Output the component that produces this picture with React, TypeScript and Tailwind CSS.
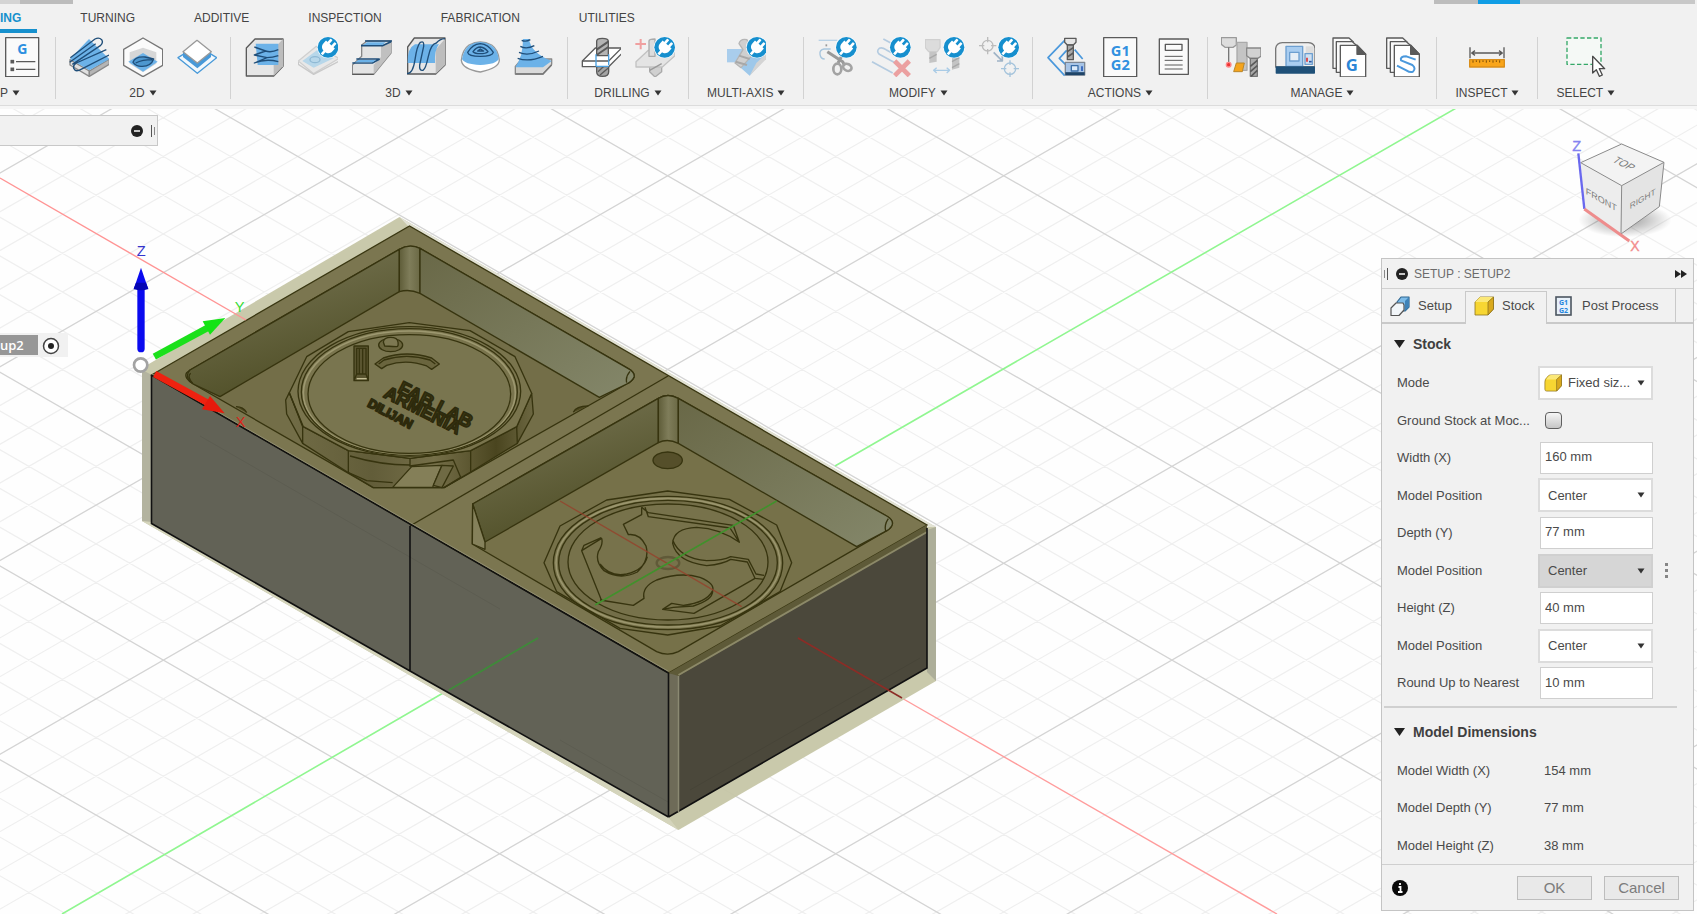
import React from "react";

type IconProps = { x: number; children: React.ReactNode };

function Glyph({ x, children }: IconProps) {
  return (
    <svg viewBox={`${x} 112 120 120`} className="size-10 shrink-0" fill="none" stroke="#5a5a5a" strokeWidth={4} strokeLinejoin="round" aria-hidden="true">
      {children}
    </svg>
  );
}

function Plug({ x }: { x: number }) {
  return (
    <g transform={`translate(${x} 143)`} stroke="none">
      <circle r="33" fill="#f6fbfe" />
      <circle r="31" fill="#168fce" />
      <g transform="rotate(42)" fill="#fff">
        <rect x="-12" y="-25" width="8" height="16" rx="2" />
        <rect x="4" y="-25" width="8" height="16" rx="2" />
        <path d="M-18-11H18V0C18 11 10 16 4 16V28H-4V16C-10 16-18 11-18 0Z" />
      </g>
    </g>
  );
}

const iconBlue = "#6cb2e8";
const lineBlue = "#1f4e79";

const icons: Record<string, React.ReactNode> = {
  "Setup sheet": (
    <Glyph x={6}>
      <rect x="17" y="114" width="99" height="117" fill="#fafafa" />
      <text x="67" y="164" textAnchor="middle" fontSize="42" fontWeight="700" fill="#2c8fe0" stroke="none" fontFamily="Open Sans">G</text>
      <path d="M48 186H106M48 209H106" />
      <path d="M32 181h10v10H32zM32 204h10v10H32z" fill="#5a5a5a" strokeWidth="1" />
    </Glyph>
  ),
  "2D Adaptive Clearing": (
    <Glyph x={210}>
      <path d="M213 180L271 214V230L213 196Z" fill="#e0e0e0" stroke="#888" />
      <path d="M271 214L331 178V194L271 230Z" fill="#b5b5b5" stroke="#888" />
      <path d="M213 178L270 118 331 178 271 212Z" fill={iconBlue} stroke="none" />
      <path d="M214 174L288 118Q300 112 308 120 314 130 304 138L220 194M212 188L290 132M240 212Q228 216 224 206 222 196 232 190L322 150M240 212L330 166" stroke={lineBlue} strokeWidth="4" />
    </Glyph>
  ),
  "2D Pocket": (
    <Glyph x={372}>
      <path d="M432 115L491 149V197L432 231 374 197V149Z" fill="#fbfbfb" stroke="#777" />
      <path d="M392 158L432 144 472 158V192L432 218 392 192Z" fill="#d7d7d7" stroke="none" />
      <path d="M388 186L432 160 476 186 432 216Z" fill={iconBlue} stroke="none" />
      <path d="M402 188Q408 170 438 172L464 178Q456 200 430 200Q414 202 402 188ZM410 190Q430 180 460 180" stroke={lineBlue} fill="#4d97cf" />
    </Glyph>
  ),
  "2D Contour": (
    <Glyph x={534}>
      <path d="M537 174L595 138 653 174 595 221Z" stroke="#4899d8" fill="#f3f8fc" />
      <path d="M552 156L595 190 636 156V172L595 206 552 172Z" fill="#4899d8" stroke="none" />
      <path d="M552 156L594 122 637 156 595 190Z" fill="#fff" stroke="#999" />
    </Glyph>
  ),
  "3D Adaptive Clearing": (
    <Glyph x={735}>
      <path d="M742 145L768 118H852V200L824 229H742Z" fill="#e6e6e6" />
      <path d="M852 118V200L824 229V148Z" fill="#bdbdbd" stroke="none" />
      <path d="M770 132H838V196H776Z" fill={iconBlue} stroke="none" />
      <path d="M766 142L800 154Q816 160 838 150M800 154L766 166 804 174Q820 174 838 168M804 174L766 190Q800 176 838 186" stroke={lineBlue} />
    </Glyph>
  ),
  "Pocket Clearing": (
    <Glyph x={897}>
      <path d="M898 184L952 140 1020 176 944 222Z" fill="#e8e8e8" stroke="#cfcfcf" />
      <path d="M910 184L956 150 1004 176 944 204Z" fill="#b7d7ea" stroke="none" />
      <ellipse cx="948" cy="180" rx="15" ry="9" stroke="#8fb9d4" />
      <path d="M898 186V194L944 224 1018 186" stroke="#c9c9c9" fill="none" />
      <Plug x={987} />
    </Glyph>
  ),
  "Steep and Shallow": (
    <Glyph x={1059}>
      <path d="M1060 196L1088 170V136L1104 124H1176V160L1124 224H1060Z" fill="#e4e4e4" stroke="#888" />
      <path d="M1176 124V160L1124 224V196L1146 172V140Z" fill="#c0c0c0" stroke="none" />
      <path d="M1098 124H1180M1086 138H1150L1176 126M1072 178H1142M1060 190H1120L1142 178" stroke={lineBlue} strokeWidth="5" />
      <path d="M1104 128H1160L1150 136H1092ZM1078 181H1130L1122 188H1068Z" fill={iconBlue} stroke="none" />
      <path d="M1060 224H1124" stroke="#5a5a5a" />
    </Glyph>
  ),
  Parallel: (
    <Glyph x={-39}>
      <path d="M-34 222V142L-14 115H78V196L50 223H-34Z" fill="#e6e6e6" />
      <path d="M78 117V196L50 223V150Z" fill="#bdbdbd" stroke="none" />
      <path d="M-34 190Q-36 146-12 134H60Q46 150 48 190Z" fill={iconBlue} stroke="none" />
      <path d="M-36 222Q-18 222-12 180T4 128Q16 122 14 140L2 196Q0 214 12 212 20 208 28 170T52 130Q62 118 78 117" stroke={lineBlue} />
    </Glyph>
  ),
  Contour: (
    <Glyph x={123}>
      <path d="M127 182Q130 150 150 136 184 118 218 136 238 150 241 182 240 206 184 217 130 208 127 182Z" fill="#fff" stroke="#999" />
      <path d="M129 178Q134 150 152 136 184 118 216 136 236 150 239 178 232 194 184 196 136 194 129 178Z" fill={iconBlue} stroke="none" />
      <path d="M146 158Q160 134 184 132 208 134 223 158 220 170 184 170 148 170 146 158ZM162 156Q172 142 184 142 198 144 207 156 200 162 184 162 168 162 162 156ZM176 154L184 148 194 154Z" stroke={lineBlue} />
    </Glyph>
  ),
  Ramp: (
    <Glyph x={285}>
      <path d="M289 200L308 178H398V194L372 223H289Z" fill="#dadada" stroke="#888" />
      <path d="M312 118H330Q336 160 398 184L372 203H289Q312 170 312 118Z" fill={iconBlue} stroke="none" />
      <path d="M308 122Q320 128 334 120M304 140Q322 150 346 138M300 158Q326 170 360 154M296 176Q330 188 372 170" stroke={lineBlue} />
      <path d="M289 223H372L398 196" stroke="#777" />
    </Glyph>
  ),
  Drill: (
    <Glyph x={483}>
      <path d="M530 178H566V216Q566 230 548 230T530 216Z" fill="#a5a5a5" />
      <path d="M534 216L562 190M540 226L564 206" />
      <path d="M487 184L526 145H605V162L566 201H487Z" fill="#fff" />
      <path d="M487 184H566L605 145" />
      <path d="M530 168V124Q530 116 547 116T565 124V168Z" fill="#b4b4b4" />
      <path d="M530 150L565 126M530 166L565 142" strokeWidth="6" />
      <path d="M528 164V200M566 164V196M528 200H566" stroke="#4aa0e0" />
    </Glyph>
  ),
  "Hole Recognition": (
    <Glyph x={648}>
      <path d="M649 133H681M665 118V149" stroke="#f0a0a0" strokeWidth="6" />
      <path d="M692 190H728V216L708 232 692 216Z" fill="#d0d0d0" stroke="#aaa" />
      <path d="M651 186L688 152H768V168L730 202H651Z" fill="#e4e4e4" stroke="#c2c2c2" />
      <path d="M690 170V124Q690 118 708 118V170Z" fill="#ddd" stroke="#aaa" />
      <path d="M692 212L728 192" stroke="#999" />
      <Plug x={737} />
    </Glyph>
  ),
  "Multi-Axis Contour": (
    <Glyph x={921}>
      <path d="M924 148H972V188H924Z" fill="#a9cdec" stroke="none" />
      <path d="M960 200L1008 160 1044 172 992 228Z" fill="#9ec8ea" stroke="none" />
      <path d="M992 228L1044 176V160L1012 190Z" fill="#d4d4d4" stroke="none" />
      <path d="M948 190L972 150 960 132Q964 116 984 120L1002 164 966 204Z" fill="#cfcfcf" stroke="#b5b5b5" />
      <path d="M950 186L984 196M960 168L992 178" stroke="#a8a8a8" strokeWidth="6" />
      <Plug x={1014} />
    </Glyph>
  ),
  Trim: (
    <Glyph x={63}>
      <path d="M68 122H124" stroke="#b9d2e6" />
      <path d="M104 148H84Q70 150 72 164T86 178" stroke="#a8c6de" />
      <path d="M91 134v6" stroke="#999" strokeWidth="5" />
      <path d="M94 156L140 186L146 198M142 160L126 190" stroke="#999" strokeWidth="9" />
      <ellipse cx="124" cy="208" rx="12" ry="16" stroke="#a3a3a3" strokeWidth="8" />
      <ellipse cx="154" cy="203" rx="13" ry="10" stroke="#a3a3a3" strokeWidth="8" transform="rotate(25 154 203)" />
      <Plug x={151} />
    </Glyph>
  ),
  "Delete Passes": (
    <Glyph x={225}>
      <path d="M228 186L290 220M298 190L250 164Q240 154 250 146 258 142 270 150L310 172M262 118L300 138" stroke="#b4cbe0" strokeWidth="5" />
      <path d="M296 184L340 228M340 184L296 228" stroke="#eba0a0" strokeWidth="14" />
      <Plug x={313} />
    </Glyph>
  ),
  "Replace Tool": (
    <Glyph x={387}>
      <path d="M388 120H432V144L424 156H398L388 144Z" fill="#dcdcdc" stroke="#d0d0d0" />
      <path d="M400 156H422V186L400 190Z" fill="#c4c4c4" stroke="none" />
      <path d="M468 166H490V204L468 210Z" fill="#c4c4c4" stroke="none" />
      <path d="M468 186L490 174M400 176L422 164M468 204L490 192" stroke="#a8a8a8" />
      <path d="M414 212H460M422 204L413 212 422 220M452 204L461 212 452 220" stroke="#a9cbe6" />
      <Plug x={474} />
    </Glyph>
  ),
  "Transform Pattern": (
    <Glyph x={546}>
      <circle cx="572" cy="138" r="16" stroke="#bcbcbc" />
      <path d="M572 112V128M572 148V164M546 138H562M582 138H598" stroke="#bcbcbc" />
      <path d="M590 158L614 182M616 168V184H600" stroke="#9fb3c6" strokeWidth="5" />
      <circle cx="639" cy="207" r="17" stroke="#a5c4dc" />
      <path d="M639 182V196M639 218V232M612 207H628M650 207H666" stroke="#a5c4dc" />
      <Plug x={635} />
    </Glyph>
  ),
  Simulate: (
    <Glyph x={750}>
      <path d="M806 122L756 174 806 228M812 152L790 176 808 194M836 150L860 178" stroke="#4a98dc" strokeWidth="5" />
      <path d="M806 116H840V128L832 136H814L806 128Z" fill="#e6e6e6" />
      <path d="M814 136H832V180H814Z" fill="#aaa" />
      <path d="M814 156L832 144M814 172L832 160" strokeWidth="5" />
      <rect x="808" y="188" width="58" height="38" fill="#a7c4e6" stroke="#7d8794" />
      <path d="M808 222H866" stroke="#1e4468" strokeWidth="9" />
      <rect x="826" y="198" width="20" height="16" fill="#dcebfa" stroke="#3a6ea8" />
      <path d="M858 200v14" stroke="#3c6cc0" strokeWidth="6" />
    </Glyph>
  ),
  "Post Process": (
    <Glyph x={906}>
      <rect x="917" y="114" width="99" height="117" fill="#fafafa" />
      <text y="168" textAnchor="middle" fontSize="44" fontWeight="700" fill="#3191e0" stroke="none" fontFamily="Open Sans">
        <tspan x="967">G1</tspan>
        <tspan x="967" dy="42">G2</tspan>
      </text>
    </Glyph>
  ),
  "Setup Sheet": (
    <Glyph x={1071}>
      <rect x="1087" y="118" width="87" height="106" fill="#fafafa" />
      <rect x="1105" y="134" width="50" height="18" />
      <path d="M1103 170H1157M1103 182H1157M1103 196H1157M1103 208H1157" strokeWidth="3" />
    </Glyph>
  ),
  "Tool Library": (
    <Glyph x={72}>
      <path d="M73 114H118V136L108 143H84L73 134Z" fill="#ddd" stroke="#9a9a9a" />
      <path d="M95 143V190" stroke="#777" />
      <circle cx="95" cy="195" r="7" fill="#e33" stroke="#f88" />
      <path d="M120 128H150V212H120Z" fill="#c4c4c4" stroke="#aaa" />
      <path d="M118 190H142L136 216H110Z" fill="#f5a41c" stroke="#b9862a" strokeWidth="3" />
      <path d="M149 145H192V170L182 176H159L149 168Z" fill="#d2d2d2" stroke="#888" />
      <path d="M160 176H181V230H160Z" fill="#aaa" stroke="#777" />
      <path d="M160 200L181 182M160 216L181 198M162 230L181 212" strokeWidth="5" />
    </Glyph>
  ),
  "Machine Library": (
    <Glyph x={234}>
      <path d="M236 202V146Q238 130 256 129H334Q352 130 354 146V202Z" fill="#f0f0f0" stroke="#777" />
      <path d="M326 140H350V196H326Z" fill="#ddd" stroke="none" />
      <rect x="267" y="140" width="50" height="60" fill="#a9cdf0" stroke="#6d9fd0" />
      <rect x="278" y="158" width="28" height="26" fill="#e6eef6" stroke="#6d9fd0" />
      <rect x="324" y="162" width="22" height="32" fill="#cfe0f2" stroke="#6d9fd0" />
      <path d="M330 174v12" stroke="#d33" strokeWidth="5" />
      <path d="M336 186h8" stroke="#2b55a0" strokeWidth="5" />
      <path d="M238 202H352V220H238Z" fill="#1f5078" stroke="#1f5078" />
    </Glyph>
  ),
  "Post Library": (
    <Glyph x={396}>
      <path d="M430 206H408V115H456L470 128" fill="#fafafa" />
      <path d="M430 218H418V126H466L480 138" fill="#fafafa" />
      <path d="M430 232V137H480L506 164V232Z" fill="#fff" />
      <path d="M480 137L506 164H480Z" fill="#5a5a5a" />
      <text x="464" y="213" textAnchor="middle" fontSize="50" fontWeight="700" fill="#2c86d6" stroke="none" fontFamily="Open Sans">G</text>
    </Glyph>
  ),
  "Template Library": (
    <Glyph x={558}>
      <path d="M592 206H569V115H617L631 128" fill="#fafafa" />
      <path d="M592 218H580V126H628L642 138" fill="#fafafa" />
      <path d="M592 232V137H641L667 164V232Z" fill="#fff" />
      <path d="M641 137L667 164H641Z" fill="#5a5a5a" />
      <path d="M656 180L628 170Q608 170 612 182L646 196Q658 206 648 216 640 220 628 212L600 198" stroke="#4a98dc" strokeWidth="6" />
    </Glyph>
  ),
  Measure: (
    <Glyph x={804}>
      <path d="M813 143V176M915 143V176M818 160H910M828 153L818 160 828 167M900 153L910 160 900 167" />
      <rect x="812" y="180" width="104" height="22" fill="#f9a51a" stroke="#d98e1b" />
      <path d="M822 182v7M832 182v5M842 182v7M852 182v5M862 182v7M872 182v5M882 182v7M892 182v5M902 182v7" stroke="#7a4c08" strokeWidth="3" />
    </Glyph>
  ),
  Select: (
    <Glyph x={1092}>
      <rect x="1095" y="115" width="102" height="79" stroke="#35a868" strokeDasharray="13 7" fill="#f5f9f6" />
      <path d="M1172 170V220L1183 210 1192 230 1201 226 1192 207H1208Z" fill="#fff" stroke="#4a4a4a" />
    </Glyph>
  ),
};

const toolGroups: { label: string; tools: string[] }[] = [
  { label: "2D", tools: ["2D Adaptive Clearing", "2D Pocket", "2D Contour"] },
  { label: "3D", tools: ["3D Adaptive Clearing", "Pocket Clearing", "Steep and Shallow", "Parallel", "Contour", "Ramp"] },
  { label: "DRILLING", tools: ["Drill", "Hole Recognition"] },
  { label: "MULTI-AXIS", tools: ["Multi-Axis Contour"] },
  { label: "MODIFY", tools: ["Trim", "Delete Passes", "Replace Tool", "Transform Pattern"] },
  { label: "ACTIONS", tools: ["Simulate", "Post Process", "Setup Sheet"] },
  { label: "MANAGE", tools: ["Tool Library", "Machine Library", "Post Library", "Template Library"] },
  { label: "INSPECT", tools: ["Measure"] },
  { label: "SELECT", tools: ["Select"] },
];

function Caret() {
  return (
    <svg viewBox="0 0 8 6" className="h-1.5 w-2 shrink-0" aria-hidden="true">
      <path d="M0.500.500H7.500L4 5.500Z" fill="#333" />
    </svg>
  );
}

function Toolbar() {
  return (
    <header className="relative z-10 bg-[#f1f1f1] text-xs text-[#444]">
      <div className="flex h-1 justify-between">
        <div className="flex">
          <span className="w-5 bg-[#d4d4d4]" />
          <span className="w-[53px] bg-[#bcbcbc]" />
        </div>
        <div className="mr-0.5 flex">
          <span className="w-11 bg-[#bdbdbd]" />
          <span className="w-[42px] bg-[#109de5]" />
          <span className="w-[175px] bg-[#c8c8c8]" />
        </div>
      </div>
      <nav className="flex h-[29px] gap-[27px]" aria-label="Workspace tabs">
        <button className="border-b-4 border-[#1690cd] pt-0.5 pr-4 font-bold text-[#1690cd]">ING</button>
        {["TURNING", "ADDITIVE", "INSPECTION", "FABRICATION", "UTILITIES"].map((t) => (
          <button key={t} className="border-b-4 border-transparent px-4 pt-0.5">
            {t}
          </button>
        ))}
      </nav>
      <div className="flex h-[73px] border-b border-[#dcdcdc] pt-1">
        <div className="mb-1.5 flex w-14 shrink-0 flex-col border-r border-[#d2d2d2]">
          <button aria-label="New setup" className="ml-0.5 w-10">
            {icons["Setup sheet"]}
          </button>
          <button className="mt-2 flex h-4 items-center gap-1">
            P<Caret />
          </button>
        </div>
        {toolGroups.map((g) => (
          <div
            key={g.label}
            className={`mb-1.5 flex shrink-0 flex-col items-center px-1.5 ${g.label === "SELECT" ? "" : "border-r border-[#d2d2d2]"}`}
          >
            <div className="flex">
              {g.tools.map((t) => (
                <button key={t} aria-label={t} className="flex w-[54px] justify-center">
                  {icons[t]}
                </button>
              ))}
            </div>
            <button className="mt-2 flex h-4 items-center gap-1 px-3">
              {g.label}
              <Caret />
            </button>
          </div>
        ))}
      </div>
      <div className="h-[3px] bg-[#f6f6f6]" />
    </header>
  );
}

const ORIGIN = { x: 667.6, y: 563.2 };
const STEP = { x: 33.62, y: 19.37 };

function gridLines(major: boolean) {
  const parts: string[] = [];
  for (let k = -70; k <= 70; k++) {
    if ((k % 5 === 0) !== major || k === 0) continue;
    const x = ORIGIN.x + k * STEP.x;
    const dy = k * STEP.y;
    const y = ORIGIN.y;
    parts.push(`M${x - STEP.x * 60} ${y - dy - STEP.y * 60}L${x + STEP.x * 60} ${y - dy + STEP.y * 60}`);
    parts.push(`M${x - STEP.x * 60} ${y + dy + STEP.y * 60}L${x + STEP.x * 60} ${y + dy - STEP.y * 60}`);
  }
  return parts.join("");
}

function ViewCube() {
  return (
    <g transform="translate(1370 110) scale(.33333)">
      <ellipse cx="765" cy="330" rx="140" ry="52" fill="url(#cubeShade)" />
      <path d="M632 158L755 102 882 157 755 227Z" fill="#f3f3f3" />
      <path d="M632 158L755 227 753 372 643 297Z" fill="#ededed" />
      <path d="M755 227L882 157 868 290 753 372Z" fill="#e4e4e4" />
      <path d="M632 158L755 102 882 157 755 227ZM755 227L753 372 868 290 882 157" fill="none" stroke="#8a8a8a" strokeWidth="3" />
      <path d="M625 130L643 297" stroke="#6a68ee" strokeWidth="7" />
      <path d="M643 297L778 393" stroke="#ee8c8c" strokeWidth="9" />
      <g fontFamily="Liberation Sans" textAnchor="middle" fill="#7d7d7d">
        <text transform="translate(694 278) skewY(30)" fontSize="27">FRONT</text>
        <text transform="translate(818 275) skewY(-30)" fontSize="25">RIGHT</text>
        <text transform="translate(753 168) rotate(27) skewX(-25)" fontSize="31">TOP</text>
      </g>
      <text x="620" y="123" textAnchor="middle" fontSize="44" fill="#8482f0" stroke="#8482f0" fontFamily="Liberation Sans">Z</text>
      <text x="795" y="424" textAnchor="middle" fontSize="42" fill="#f28c8c" stroke="#f28c8c" fontFamily="Liberation Sans">X</text>
    </g>
  );
}

function PuckPocket() {
  return (
    <g transform="translate(240 210) scale(.33333)" stroke="#37340f" strokeWidth="4" fill="none" strokeLinejoin="round">
      <path d="M-150 480L478 118Q508 100 540 115L1165 476Q1186 488 1182 502 1176 514 1160 522L612 833H400L-140 522Q-170 504-160 488Z" fill="#736e48" />
      <path d="M-150 480L478 118V245L-60 560-140 522Q-170 500-150 480Z" fill="url(#wallLeft)" />
      <path d="M478 118Q508 100 540 115V250Q508 236 478 245Z" fill="url(#wallCorner)" />
      <path d="M540 115L1165 476Q1186 488 1182 502 1176 514 1160 522L1078 562 540 250Z" fill="url(#wallRight)" />
      <path d="M-148 490Q-160 500-142 520M1170 484Q1156 500 1160 518" />
      <path d="M-12 590Q10 590 20 608M1000 607Q1008 588 1045 588" fill="#4e4920" />
      <path d="M148 548L137 570 140 612 188 700 322 786 400 833H612L692 786 832 700 880 612 875 550 830 650 692 722 510 745 325 722 190 650Z" fill="url(#puckSide)" />
      <path d="M508 338L325 365 200 440 148 548 190 650 325 722 510 745 692 722 830 650 875 550 825 440 690 362Z" fill="#79744d" />
      <path d="M148 548L188 650V700M325 722V786M510 745V770M692 722V786M830 650L832 700M510 765Q420 765 330 738" />
      <ellipse cx="508" cy="544" rx="334" ry="194" />
      <ellipse cx="508" cy="549" rx="318" ry="186" stroke="#9d9870" strokeWidth="5" />
      <ellipse cx="508" cy="546" rx="324" ry="190" />
      <ellipse cx="508" cy="552" rx="304" ry="178" fill="#79754f" />
      <path d="M342 408H385V512H342ZM350 415H378V492H350ZM358 415V492M368 415V492M350 492L342 512M378 492L385 512" fill="#5a5530" />
      <path d="M350 506H380" stroke="#c4be94" />
      <ellipse cx="452" cy="405" rx="36" ry="20" fill="#6a653e" />
      <path d="M430 396Q432 382 452 382T474 396 470 410 434 408Z" fill="#7d7852" />
      <path d="M405 462L430 444Q500 420 575 444L598 462 575 478 560 468Q500 446 440 466L425 476Z" fill="#6a653e" />
      <path d="M416 462L432 450Q500 428 570 450L586 462" />
      <path d="M515 770L458 832H578L606 766Z" fill="#847f58" />
      <path d="M606 766L580 826 606 833 640 768Z" fill="#6f6a44" />
      <path d="M510 768L640 750 662 802 612 833M322 786L380 812 458 818" />
      <g fontFamily="Liberation Sans" fontWeight="700" fill="#3c3814" stroke="#2d2a0c" strokeWidth="5">
        <text transform="translate(470 546) rotate(27)" fontSize="56">FAB LAB</text>
        <text transform="translate(428 560) rotate(27)" fontSize="54">ARMENIA</text>
        <text transform="translate(380 588) rotate(28)" fontSize="38">DILIJAN</text>
      </g>
    </g>
  );
}

function SpinnerPocket() {
  return (
    <g transform="translate(440 370) scale(.33333)" stroke="#37340f" strokeWidth="4" fill="none" strokeLinejoin="round">
      <path d="M98 402L655 85Q683 68 715 85L1340 438Q1364 452 1355 468 1350 478 1335 485L715 845Q683 860 650 845L97 522Z" fill="#767149" />
      <path d="M98 402L655 85V218L135 516Z" fill="url(#wallLeft)" />
      <path d="M98 402L135 516V538L97 522Z" fill="#85815b" />
      <path d="M655 85Q683 68 715 85V220Q683 204 655 218Z" fill="url(#wallCorner)" />
      <path d="M715 85L1340 438Q1364 452 1355 468 1350 478 1335 485L1250 530 715 220Z" fill="url(#wallRight)" />
      <path d="M1345 446Q1332 465 1337 484" />
      <ellipse cx="683" cy="271" rx="44" ry="25" fill="#554f2a" />
      <path d="M683 363L868 388 1010 465 1055 578 1020 665 840 768 683 795 540 775 350 665 312 578 360 468 500 390Z" />
      <ellipse cx="684" cy="579" rx="344" ry="200" />
      <ellipse cx="684" cy="578" rx="336" ry="193" stroke="#9a956d" strokeWidth="5" />
      <ellipse cx="684" cy="578" rx="328" ry="187" fill="#736e48" />
      <ellipse cx="684" cy="576" rx="300" ry="174" fill="#77724b" />
      <path d="M605 412V434L550 463 565 494Q600 490 618 528 630 570 592 606 540 632 492 602 465 575 475 545 490 522 485 505L425 542 485 692M425 542L432 526 484 503M480 582Q510 622 560 612 612 600 622 560" />
      <path d="M615 412L625 440 870 474 898 517Q840 475 770 472 700 475 698 520 710 575 800 587 850 582 872 568L922 576 945 625 972 628M698 510Q720 566 800 572 850 572 872 560L925 568 948 612 972 616M605 412L625 428 880 466 898 517M870 474L880 466" />
      <path d="M480 690L580 706 612 685Q605 650 650 630 720 605 780 622 825 640 818 662 800 698 730 706L695 700 668 718 762 730 945 625M818 664Q818 690 760 708L700 712 668 718" />
      <ellipse cx="684" cy="579" rx="34" ry="18" stroke="#605a38" strokeWidth="7" />
      <path d="M360 393L905 710" stroke="#96402a" strokeWidth="4" opacity=".8" />
      <path d="M465 705L1010 393" stroke="#41912c" strokeWidth="5" />
    </g>
  );
}

function Scene() {
  return (
    <svg viewBox="0 109 1697 805" preserveAspectRatio="xMinYMin slice" className="absolute inset-0 size-full" role="img" aria-label="Model viewport">
      <defs>
        <linearGradient id="wallLeft" x1="0.4" y1="0.2" x2="0.65" y2="0.75">
          <stop offset="0" stopColor="#6e6c49" />
          <stop offset="1" stopColor="#55542d" />
        </linearGradient>
        <linearGradient id="wallCorner" x1="0" x2="1">
          <stop offset="0" stopColor="#5e5c38" />
          <stop offset=".5" stopColor="#7f7d5a" />
          <stop offset="1" stopColor="#6b6945" />
        </linearGradient>
        <linearGradient id="wallRight" x1="0" y1="0" x2="1" y2="1">
          <stop offset="0" stopColor="#696847" />
          <stop offset="1" stopColor="#84876a" />
        </linearGradient>
        <linearGradient id="puckSide" x1="0" x2="1">
          <stop offset="0" stopColor="#716c46" />
          <stop offset=".35" stopColor="#625d39" />
          <stop offset=".6" stopColor="#756f49" />
          <stop offset=".85" stopColor="#4a451f" />
          <stop offset="1" stopColor="#6c6741" />
        </linearGradient>
        <radialGradient id="cubeShade">
          <stop offset="0.3" stopColor="#000" stopOpacity=".28" />
          <stop offset="1" stopColor="#000" stopOpacity="0" />
        </radialGradient>
      </defs>
      <rect x="0" y="109" width="1697" height="805" fill="#fefefe" />
      <path d={gridLines(false)} stroke="#efefef" strokeWidth="1.2" fill="none" />
      <path d={gridLines(true)} stroke="#d4d4d4" strokeWidth="1.3" fill="none" />
      <path d="M900 697L1277 914" stroke="#ff9c9c" strokeWidth="1.400" />
      <path d="M62 914L450 689M835 466L1458 107" stroke="#90f690" strokeWidth="1.600" />

      <path d="M142 368L399.500 217 936 527V681L678.500 830 142 521Z" fill="#c6c6a6" fillOpacity=".95" />
      <path d="M399.500 217L936 527 927 527 409 227Z" fill="#e2e2d4" />
      <path d="M142 370L152 375V524L142 521Z" fill="#b3b39f" />
      <path d="M927 530L936 527V681L927 672Z" fill="#adae99" />
      <path d="M142 521L678.500 830 668 817 152 522Z" fill="#d4d4bb" />

      <path d="M151.500 375L668.500 673V817L410 671 151.500 523.500Z" fill="#626256" />
      <path d="M668.500 673L927 525V668L668.500 817Z" fill="#4b483b" />
      <path d="M668.500 673L678.500 674V812L668.500 817Z" fill="#6e6b58" />
      <path d="M151.500 375L409.500 226 927 525 668.500 673Z" fill="#7b7650" stroke="#3a3712" strokeWidth="1.3" />
      <path d="M0 178L246 320" stroke="#ff9494" strokeWidth="1.400" />
      <path d="M668.500 673L927 525V532L678.500 676Z" fill="#5e5a38" />
      <path d="M678.500 675L927 532" stroke="#8c8968" strokeWidth="2" />
      <path d="M668 376L410 526" stroke="#37340f" strokeWidth="1.300" />
      <path d="M668.500 673V817M668.500 817L927 668V528M151.500 375V523.500L410 671 668.500 817M410 526V671M151.500 375L668.500 673" fill="none" stroke="#111" strokeWidth="1.600" />
      <path d="M152 374L668 671" stroke="#8f8c70" strokeWidth="1" />
      <path d="M200 436L500 609M560 740L668 802M690 790L920 658" stroke="#000" strokeOpacity=".06" />
      <path d="M449 690L538 638" stroke="#3f8a3a" strokeWidth="1.800" />
      <path d="M798 638L902 698" stroke="#8c2c26" strokeWidth="1.600" />
      <path d="M678.500 676V812" stroke="#8b8972" strokeWidth="1.500" />

      <PuckPocket />
      <SpinnerPocket />

      <g transform="translate(0 200) scale(.33333)">
        <path d="M423 268V446" stroke="#0a0aef" strokeWidth="22" strokeLinecap="round" />
        <path d="M423 203L401 268H445Z" fill="#0a0aef" />
        <path d="M401 266Q423 276 445 266L438 248H408Z" fill="#0505b4" />
        <path d="M463 470L622 384" stroke="#1be01b" strokeWidth="20" />
        <path d="M676 354L608 364 630 404Z" fill="#14e414" />
        <path d="M464 522L622 608" stroke="#ee2210" strokeWidth="20" />
        <path d="M674 640L630 588 606 628Z" fill="#e81a0c" />
        <circle cx="422" cy="495" r="20" fill="#fff" stroke="#a3a3a3" strokeWidth="8" />
        <g fontFamily="Liberation Sans" fontSize="44" textAnchor="middle">
          <text x="424" y="169" fill="#3434cc">Z</text>
          <text x="719" y="337" fill="#35dd35">Y</text>
          <text x="722" y="682" fill="#d8231a">X</text>
        </g>
      </g>

      <rect x="0" y="333" width="68" height="24" fill="#f1f1f1" />
      <rect x="0" y="335" width="38" height="20" fill="#979797" />
      <text x="0" y="350" fontFamily="Open Sans" fontWeight="600" fontSize="13" fill="#fff">up2</text>
      <circle cx="51" cy="346" r="7.500" fill="#fff" stroke="#444" strokeWidth="1.500" />
      <circle cx="51" cy="346" r="3" fill="#222" />

      <ViewCube />
    </svg>
  );
}

function MinusDot() {
  return (
    <svg viewBox="0 0 12 12" className="size-3 shrink-0" aria-hidden="true">
      <circle cx="6" cy="6" r="6" fill="#222" />
      <path d="M3 6H9" stroke="#fff" strokeWidth="1.500" />
    </svg>
  );
}

function Grip({ flip = false }: { flip?: boolean }) {
  return (
    <span className={`flex items-center gap-0.5 ${flip ? "flex-row-reverse" : ""}`} aria-hidden="true">
      <span className="h-2 w-px bg-[#888]" />
      <span className="h-3 w-px bg-[#555]" />
    </span>
  );
}

function YellowCube({ rounded = false }: { rounded?: boolean }) {
  return (
    <svg viewBox="0 0 20 20" className={rounded ? "size-[18px] shrink-0" : "size-5 shrink-0"} strokeLinejoin="round" stroke="#8e7420" strokeWidth="0.800" aria-hidden="true">
      {rounded ? (
        <>
          <path d="M1 9Q1 6 3 4L5 2Q6 1 8 1H19.500V13L14 19H3Q1 19 1 17Z" fill="#f7d632" />
          <path d="M3 5L6 2Q7 1 8 1H19.500L14 6H3Z" fill="#fbe878" stroke="none" />
        </>
      ) : (
        <>
          <path d="M1 6L6 1H19.500V13L14 19H1Z" fill="#f7d632" />
          <path d="M1 6L6 1H19.500L14 6Z" fill="#fbe878" stroke="none" />
        </>
      )}
      <path d="M14 6L19.500 1V13L14 19Z" fill="#d9a91d" />
    </svg>
  );
}

function TextRow({ id, label, value }: { id: string; label: string; value: string }) {
  return (
    <div className="flex items-center">
      <label htmlFor={id} className="w-[143px] shrink-0">{label}</label>
      <input id={id} defaultValue={value} className="h-8 w-[113px] border border-[#cfcfcf] bg-white px-1 pb-0.5 outline-none" />
    </div>
  );
}

function SelectRow({ id, label, value, active, cube }: { id: string; label: string; value: string; active?: boolean; cube?: boolean }) {
  return (
    <div className="flex items-center">
      <label htmlFor={id} className="w-[141px] shrink-0">{label}</label>
      <div className="relative flex w-[115px] items-center">
        <select
          id={id}
          defaultValue={value}
          className={`h-[34px] w-full appearance-none border-2 outline-none ${cube ? "pl-7" : "pl-2"} ${active ? "border-[#d0d0d0] bg-[#d6d6d6]" : "border-[#dcdcdc] bg-white"}`}
        >
          <option>{value}</option>
        </select>
        {cube && (
          <span className="pointer-events-none absolute left-1.5">
            <YellowCube rounded />
          </span>
        )}
        <span className="pointer-events-none absolute right-2 flex">
          <Caret />
        </span>
      </div>
      {active && (
        <button aria-label="More options" className="ml-3 flex flex-col gap-[3px]">
          <span className="size-[3px] bg-[#858585]" />
          <span className="size-[3px] bg-[#858585]" />
          <span className="size-[3px] bg-[#858585]" />
        </button>
      )}
    </div>
  );
}

function SectionTitle({ children }: { children: React.ReactNode }) {
  return (
    <h2 className="flex h-10 items-center gap-2 pl-3 text-sm font-bold text-[#3f3f3f]">
      <svg viewBox="0 0 11 8" className="h-2 w-[11px]" aria-hidden="true">
        <path d="M0 0H11L5.500 8Z" fill="#222" />
      </svg>
      {children}
    </h2>
  );
}

function SetupPanel() {
  return (
    <aside className="mt-[149px] mr-[3px] w-[313px] border border-[#c4c4c4] bg-[#f1f1f1] text-[13px] text-[#4a4a4a]">
      <div className="flex h-[30px] items-center border-b border-[#d0d0d0] pr-1.5 pl-0.5 text-xs text-[#6b6b6b]">
        <Grip />
        <button className="ml-2 flex items-center gap-1.5">
          <MinusDot />
          SETUP : SETUP2
        </button>
        <button aria-label="Expand" className="ml-auto">
          <svg viewBox="0 0 12 8" className="h-2 w-3">
            <path d="M0 0L6 4 0 8ZM6 0L12 4 6 8Z" fill="#222" />
          </svg>
        </button>
      </div>
      <div className="flex h-[35px]" role="tablist">
        <button role="tab" className="flex w-[83px] items-center gap-2 border-b-2 border-[#c9c9c9] pl-2">
          <svg viewBox="0 0 20 20" className="size-5" strokeLinejoin="round" strokeWidth="1.200" aria-hidden="true">
            <path d="M7 6L11 1H19V11L15 15H7Z" fill="#7dbbe8" stroke="#2f6690" />
            <path d="M15 5L19 1V11L15 15Z" fill="#3f83b8" stroke="none" />
            <path d="M1 12L6 7H13L14 9V14L9 19.500H1Z" fill="#f2f6f9" stroke="#555" />
          </svg>
          Setup
        </button>
        <button role="tab" aria-selected="true" className="mt-0.5 flex w-[82px] items-center gap-2 border border-b-0 border-[#c9c9c9] pb-1 pl-2">
          <YellowCube />
          Stock
        </button>
        <button role="tab" className="flex w-32 items-center gap-2.5 border-b-2 border-[#c9c9c9] pl-2">
          <svg viewBox="0 0 17 20" className="h-5 w-[17px]" aria-hidden="true">
            <rect x="1" y="1" width="15" height="18" fill="#e8f1fa" stroke="#4b5560" strokeWidth="1.600" />
            <text y="9" textAnchor="middle" fontSize="7" fontWeight="700" fontFamily="Open Sans" fill="#2585dc">
              <tspan x="8.500">G1</tspan>
              <tspan x="8.500" dy="7.500">G2</tspan>
            </text>
          </svg>
          Post Process
        </button>
        <span className="flex-1 border-b-2 border-l border-[#c9c9c9]" />
      </div>
      <section>
        <SectionTitle>Stock</SectionTitle>
        <div className="grid h-[338px] grid-rows-9 pl-[15px]">
          <SelectRow id="mode" label="Mode" value="Fixed siz..." cube />
          <div className="flex items-center">
            <label htmlFor="ground" className="w-[148px] shrink-0">Ground Stock at Moc...</label>
            <input id="ground" type="checkbox" className="size-[17px] appearance-none rounded border border-[#5f5f5f] bg-linear-to-b from-[#f6f6f6] to-[#c6c6c6]" />
          </div>
          <TextRow id="width" label="Width (X)" value="160 mm" />
          <SelectRow id="posx" label="Model Position" value="Center" />
          <TextRow id="depth" label="Depth (Y)" value="77 mm" />
          <SelectRow id="posy" label="Model Position" value="Center" active />
          <TextRow id="height" label="Height (Z)" value="40 mm" />
          <SelectRow id="posz" label="Model Position" value="Center" />
          <TextRow id="round" label="Round Up to Nearest" value="10 mm" />
        </div>
      </section>
      <section className="pt-1">
        <hr className="mr-4 ml-0.5 border-t-2 border-[#d0d0d0]" />
        <div className="pt-1">
          <SectionTitle>Model Dimensions</SectionTitle>
        </div>
        <dl className="grid h-28 grid-cols-[147px_1fr] grid-rows-3 items-center pl-[15px]">
          <dt>Model Width (X)</dt>
          <dd>154 mm</dd>
          <dt>Model Depth (Y)</dt>
          <dd>77 mm</dd>
          <dt>Model Height (Z)</dt>
          <dd>38 mm</dd>
        </dl>
      </section>
      <footer className="flex h-[46px] items-center gap-3 border-t border-[#cfcfcf] pr-3.5 pl-2.5 text-[15px] text-[#7c7c7c]">
        <svg viewBox="0 0 16 16" className="mr-auto size-4" role="img" aria-label="Information">
          <circle cx="8" cy="8" r="8" fill="#0a0a0a" />
          <path d="M8 3V5M6.500 7H8.500V12M6 12H10.500" stroke="#fff" strokeWidth="1.800" fill="none" />
        </svg>
        <button className="h-6 w-[75px] border border-[#bdbdbd] bg-[#e9e9e9] leading-none">OK</button>
        <button className="h-6 w-[75px] border border-[#bdbdbd] bg-[#e9e9e9] leading-none">Cancel</button>
      </footer>
    </aside>
  );
}

export default function App() {
  return (
    <div className="flex min-h-screen flex-col overflow-hidden bg-white font-['Liberation_Sans',Arial,sans-serif]">
      <Toolbar />
      <main className="relative flex-1">
        <Scene />
        <div className="relative flex items-start justify-between">
          <div className="mt-1.5 flex h-[31px] w-[158px] items-center justify-end gap-2 border border-l-0 border-[#c8c8c8] bg-[#f1f1f1] pr-0.5">
            <button aria-label="Collapse browser">
              <MinusDot />
            </button>
            <Grip flip />
          </div>
          <SetupPanel />
        </div>
      </main>
    </div>
  );
}
